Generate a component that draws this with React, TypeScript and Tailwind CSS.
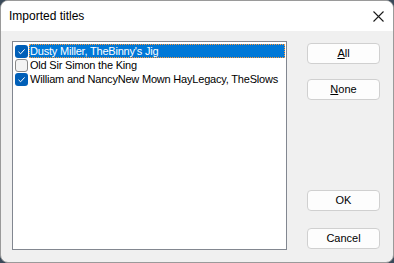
import React from "react";

const font = { fontFamily: '"Liberation Sans", Arial, sans-serif' };

function Check({ checked }: { checked: boolean }) {
  return checked ? (
    <div className="w-[13px] h-[13px] rounded-[3px] bg-[#005fb8] flex items-center justify-center shrink-0">
      <svg width="9" height="9" viewBox="0 0 9 9">
        <path d="M1.5 4.8 L3.6 6.8 L7.6 2.4" fill="none" stroke="#ffffff" strokeWidth="1" />
      </svg>
    </div>
  ) : (
    <div className="w-[13px] h-[13px] rounded-[3px] bg-[#f3f3f3] border border-[#8a8a8a] shrink-0" />
  );
}

function Row({ checked, text, selected }: { checked: boolean; text: string; selected?: boolean }) {
  return (
    <div className="flex items-center h-[14px] gap-[1px]">
      <Check checked={checked} />
      <div
        className={
          selected
            ? "flex-1 h-[14px] bg-[#0078d7] text-white border border-dotted border-[#ff9a3c] flex items-center pl-0 leading-none whitespace-nowrap"
            : "flex-1 h-[14px] text-black flex items-center pl-[1px] leading-none whitespace-nowrap"
        }
      >
        {text}
      </div>
    </div>
  );
}

function Btn({ children }: { children: React.ReactNode }) {
  return (
    <div className="w-[73px] h-[21px] rounded-[4px] bg-[#fdfdfd] border border-[#d0d0d0] flex items-center justify-center text-[11px] text-black">
      {children}
    </div>
  );
}

export default function App() {
  return (
    <div className="w-[394px] h-[263px] bg-[#3a4a5a]" style={font}>
      <div className="w-[394px] h-[263px] rounded-[8px] border border-[#9a9a9a] overflow-hidden flex flex-col bg-[#f0f0f0]">
        <div className="h-[30px] bg-white flex items-center justify-between pl-[8px] pr-[9px] shrink-0">
          <span className="text-[12px] text-black">Imported titles</span>
          <svg width="11" height="11" viewBox="0 0 11 11">
            <path d="M0.5 0.5 L10.5 10.5 M10.5 0.5 L0.5 10.5" stroke="#1a1a1a" strokeWidth="1.1" />
          </svg>
        </div>
        <div className="flex flex-1 pt-[10px] pl-[11px]">
          <div className="w-[275px] h-[209px] bg-white border border-[#828790] pt-[2px] pl-[2px] pr-[1px] text-[11px] tracking-[-0.2px] overflow-hidden">
            <Row checked text="Dusty Miller, TheBinny's Jig" selected />
            <Row checked={false} text="Old Sir Simon the King" />
            <Row checked text="William and NancyNew Mown HayLegacy, TheSlows" />
          </div>
          <div className="flex flex-col ml-[20px] pt-[2px]">
            <Btn>
              <span><span className="underline">A</span>ll</span>
            </Btn>
            <div className="h-[15px]" />
            <Btn>
              <span><span className="underline">N</span>one</span>
            </Btn>
            <div className="h-[90px]" />
            <Btn>OK</Btn>
            <div className="h-[17px]" />
            <Btn>Cancel</Btn>
          </div>
        </div>
      </div>
    </div>
  );
}
